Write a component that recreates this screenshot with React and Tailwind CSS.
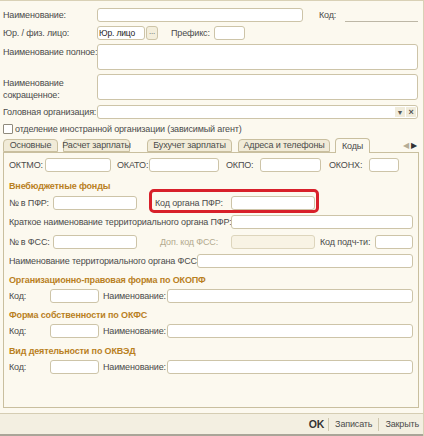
import React from 'react'

// ─── Small building blocks ────────────────────────────────────────────────────
function Field({ className = '', children }) {
  return (
    <div className={`h-[14px] bg-white border border-[#cdc4a8] rounded-[3px] ${className}`}>
      {children}
    </div>
  )
}

function Label({ className = '', children }) {
  return <span className={`text-[#4b4b4b] whitespace-nowrap ${className}`}>{children}</span>
}

function Heading({ className = '', children }) {
  return <div className={`font-bold text-[#b9801e] whitespace-nowrap ${className}`}>{children}</div>
}

function Tab({ active, className = '', children }) {
  return (
    <div
      className={`flex items-center justify-center whitespace-nowrap border border-[#c9bf9f] rounded-t-[4px] text-[#4b4b4b] ${
        active ? 'h-[15px] bg-[#fcf9ef] border-b-0 relative top-[1px]' : 'h-[13px] bg-[#f1ebd8]'
      } ${className}`}
    >
      {children}
    </div>
  )
}

// ─── Classifier row (Код + Наименование) ──────────────────────────────────────
function CodeRow({ className = '' }) {
  return (
    <div className={`flex items-center ${className}`}>
      <Label className="w-[41px]">Код:</Label>
      <Field className="w-[49px]" />
      <Label className="ml-[4px] w-[64px]">Наименование:</Label>
      <Field className="w-[246px]" />
    </div>
  )
}

export default function App() {
  return (
    <div
      className="w-[424px] h-[436px] bg-[#fcf9ef] border-t border-[#d9d1b6] border-r text-[9px] tracking-[-0.15px] leading-none relative overflow-hidden"
      style={{ fontFamily: '"Liberation Sans", Arial, sans-serif' }}
    >
      {/* Шапка */}
      <div className="pl-[3px] pt-[7px] pr-[5px]">
        <div className="flex items-center">
          <Label className="w-[94px]">Наименование:</Label>
          <Field className="w-[206px]" />
          <Label className="ml-[16px] w-[26px]">Код:</Label>
          <div className="h-[13px] w-[73px] border-b border-[#bdb7a6]" />
        </div>

        <div className="flex items-center mt-[4px]">
          <Label className="w-[94px]">Юр. / физ. лицо:</Label>
          <Field className="w-[48px] flex items-center pl-[1px]">
            <span className="text-[#222] text-[8.5px]">Юр. лицо</span>
          </Field>
          <div className="ml-[1px] h-[14px] w-[12px] rounded-[3px] border border-[#cdc4a8] bg-[#f3eedc] flex items-end justify-center pb-[3px] text-[#555] text-[8px]">
            ...
          </div>
          <Label className="ml-[13px] w-[43px]">Префикс:</Label>
          <Field className="w-[31px]" />
        </div>

        <div className="flex mt-[4px]">
          <Label className="w-[94px] pt-[4px]">Наименование полное:</Label>
          <div className="h-[26px] flex-1 bg-white border border-[#cdc4a8] rounded-[3px]" />
        </div>

        <div className="flex mt-[4px]">
          <Label className="w-[94px] pt-[3px] leading-[12px]">
            Наименование
            <br />
            сокращенное:
          </Label>
          <div className="h-[26px] flex-1 bg-white border border-[#cdc4a8] rounded-[3px]" />
        </div>

        <div className="flex items-center mt-[4px]">
          <Label className="w-[94px]">Головная организация:</Label>
          <Field className="flex-1 flex justify-end items-center pr-[1px] gap-[1px]">
            <div className="w-[10px] h-[10px] bg-[#f1ecdb] flex items-center justify-center text-[#555] text-[7px]">▼</div>
            <div className="w-[10px] h-[10px] bg-[#f1ecdb] flex items-center justify-center text-[#555] text-[9px] font-bold">×</div>
          </Field>
        </div>

        <div className="flex items-center mt-[5px]">
          <div className="w-[10px] h-[10px] border border-[#8f8a7c] bg-white rounded-[1px]" />
          <Label className="ml-[2px]">отделение иностранной организации (зависимый агент)</Label>
        </div>
      </div>

      {/* Закладки */}
      <div className="mt-[3px] ml-[3px] w-[416px] flex items-end h-[15px]">
        <Tab className="w-[55px]">Основные</Tab>
        <Tab className="ml-[5px] w-[67px]">Расчет зарплаты</Tab>
        <Tab className="ml-[17px] w-[85px]">Бухучет зарплаты</Tab>
        <Tab className="ml-[6px] w-[92px]">Адреса и телефоны</Tab>
        <Tab active className="ml-[5px] w-[35px]">Коды</Tab>
        <div className="ml-auto mb-[2px] flex items-center gap-[2px] pr-[2px] text-[8px]">
          <span className="text-[#b5ad96]">◀</span>
          <span className="text-[#333]">▶</span>
        </div>
      </div>

      {/* Панель «Коды» */}
      <div className="ml-[3px] w-[416px] h-[256px] border border-[#c9bf9f] pl-[5px] pt-[5px]">
        <div className="flex items-center">
          <Label className="w-[36px]">ОКТМО:</Label>
          <Field className="w-[66px]" />
          <Label className="ml-[6px] w-[32px]">ОКАТО:</Label>
          <Field className="w-[70px]" />
          <Label className="ml-[7px] w-[34px]">ОКПО:</Label>
          <Field className="w-[61px]" />
          <Label className="ml-[8px] w-[40px]">ОКОНХ:</Label>
          <Field className="w-[30px]" />
        </div>

        <Heading className="mt-[10px]">Внебюджетные фонды</Heading>

        <div className="flex items-center mt-[5px]">
          <Label className="w-[44px]">№ в ПФР:</Label>
          <Field className="w-[84px]" />
          <Label className="ml-[18px] w-[76px]">Код органа ПФР:</Label>
          <Field className="w-[84px]" />
        </div>

        <div className="flex items-center mt-[5px]">
          <Label className="w-[222px]">Краткое наименование территориального органа ПФР:</Label>
          <Field className="w-[182px]" />
        </div>

        <div className="flex items-center mt-[6px]">
          <Label className="w-[44px]">№ в ФСС:</Label>
          <Field className="w-[84px]" />
          <span className="ml-[23px] w-[71px] text-[#b3aa8e] whitespace-nowrap">Доп. код ФСС:</span>
          <div className="h-[14px] w-[84px] bg-[#f8f3e4] border border-[#ddd5bc] rounded-[3px]" />
          <Label className="ml-[5px] w-[55px]">Код подч-ти:</Label>
          <Field className="w-[38px]" />
        </div>

        <div className="flex items-center mt-[5px]">
          <Label className="w-[188px]">Наименование территориального органа ФСС:</Label>
          <Field className="w-[216px]" />
        </div>

        <Heading className="mt-[8px]">Организационно-правовая форма по ОКОПФ</Heading>
        <CodeRow className="mt-[4px]" />

        <Heading className="mt-[8px]">Форма собственности по ОКФС</Heading>
        <CodeRow className="mt-[4px]" />

        <Heading className="mt-[9px]">Вид деятельности по ОКВЭД</Heading>
        <CodeRow className="mt-[4px]" />
      </div>

      {/* Нижняя панель кнопок */}
      <div className="absolute left-0 right-0 bottom-0 h-[23px] bg-[#f3efe1] border-t border-[#d5cdb3] border-b-2 border-b-[#a9a598] flex items-center justify-end pr-[4px]">
        <span className="font-bold text-[#333] text-[10.5px] px-[4px]">OK</span>
        <span className="h-[13px] border-l border-[#cfc7ae]" />
        <span className="text-[#4b4b4b] px-[6px]">Записать</span>
        <span className="h-[13px] border-l border-[#cfc7ae]" />
        <span className="text-[#4b4b4b] pl-[6px]">Закрыть</span>
      </div>

      {/* Пометка: красная рамка вокруг «Код органа ПФР» */}
      <div className="absolute left-[149px] top-[188px] w-[170px] h-[24px] border-[3px] border-[#d8202a] rounded-[5px]" />
    </div>
  )
}
